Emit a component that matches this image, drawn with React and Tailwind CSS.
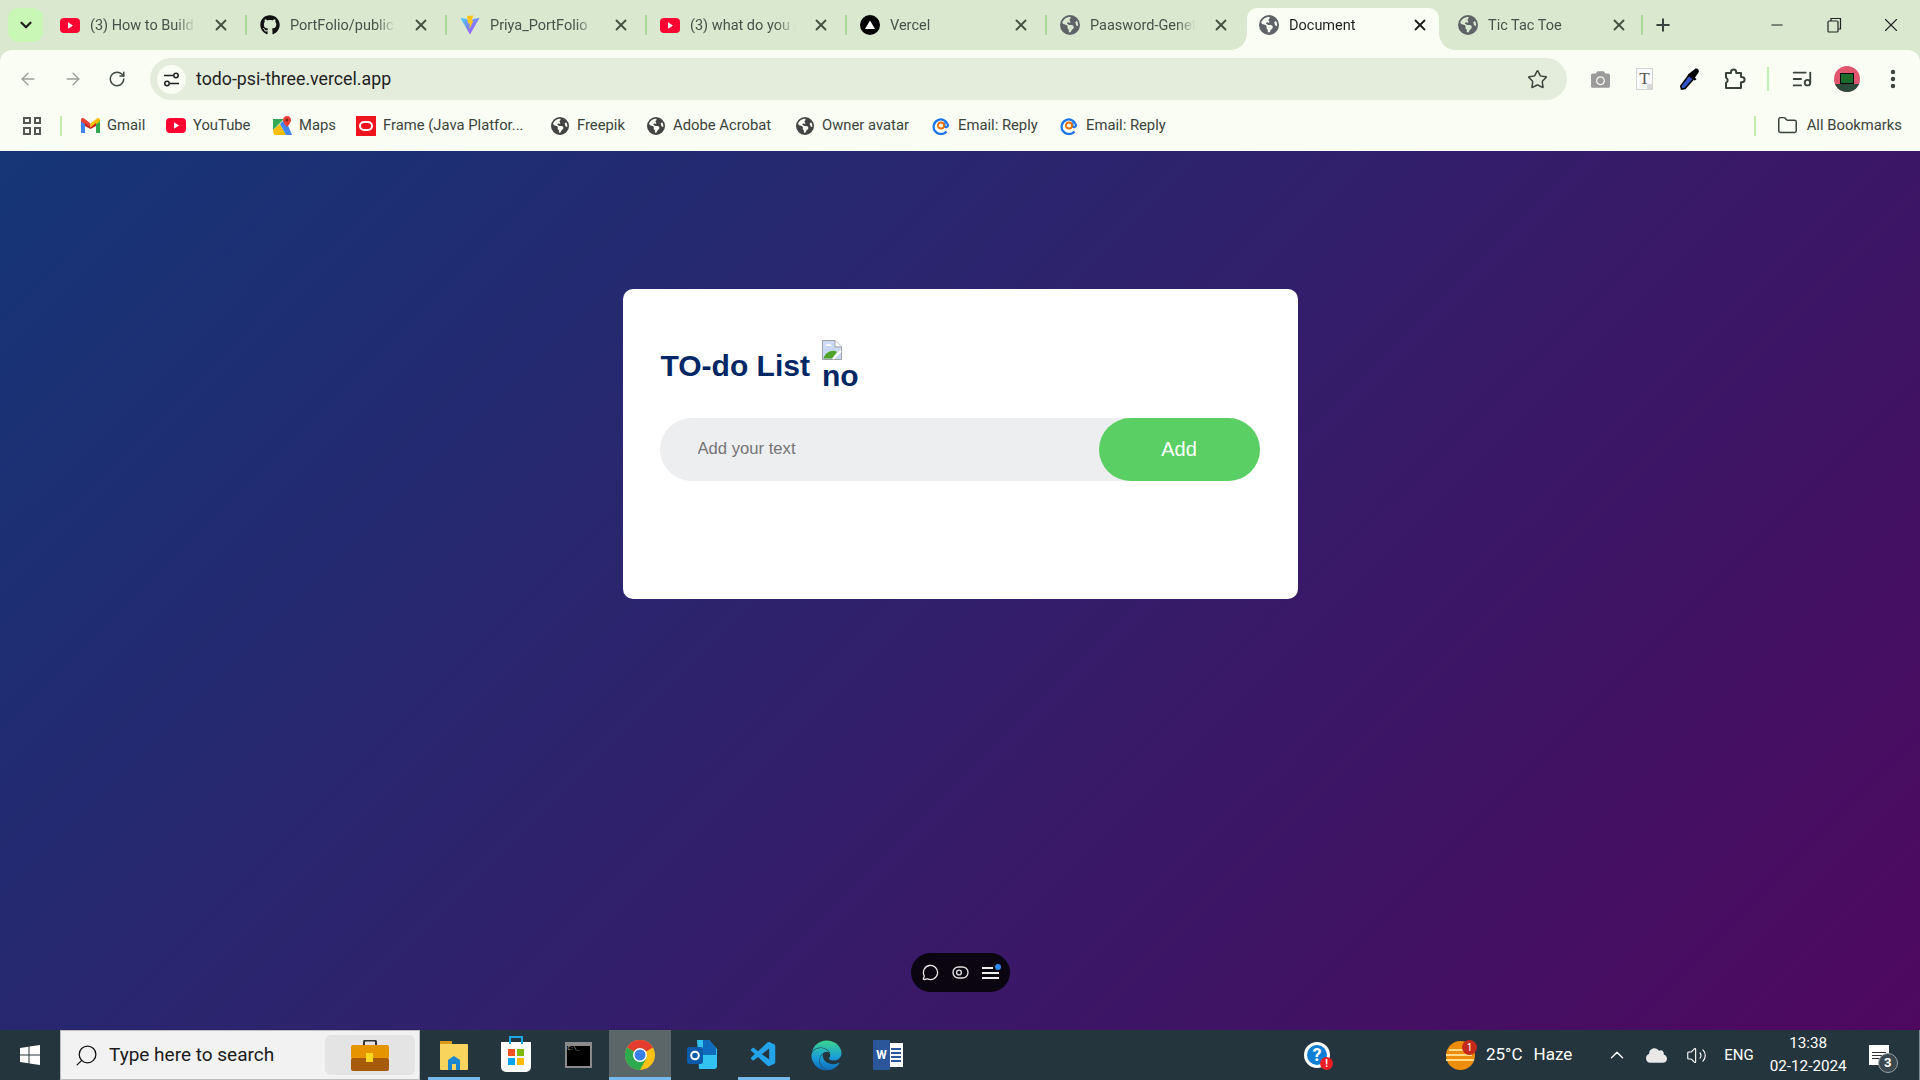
import { ArrowLeft, ArrowRight, RotateCw, Star, ListMusic, EllipsisVertical, X, Plus, Minus, ChevronDown, ChevronUp, Volume2, MessageCircle, Folder, Search } from 'lucide-react';
import { FaGithub, FaCamera, FaCloud, FaEdge } from 'react-icons/fa';
import { FaEarthAmericas } from 'react-icons/fa6';
import { VscVscode } from 'react-icons/vsc';

const uiFont = "font-['Roboto','Noto_Sans',sans-serif]";

const YouTubeIcon = () => (
    <svg width="20" height="15" viewBox="0 0 20 15">
        <rect width="20" height="15" rx="4" fill="#ff0033" />
        <path d="M8 4.3 L13 7.5 L8 10.7 Z" fill="#fff" />
    </svg>
);

const ViteIcon = () => (
    <svg width="20" height="20" viewBox="0 0 20 20">
        <defs>
            <linearGradient id="viteGrad" x1="0" y1="0" x2="1" y2="1">
                <stop offset="0" stopColor="#41d1ff" />
                <stop offset="1" stopColor="#bd34fe" />
            </linearGradient>
        </defs>
        <path d="M0.5 3 L10 19.5 L19.5 3 L13 4 L10 9 L7 4 Z" fill="url(#viteGrad)" />
        <path d="M7 1 L13.5 0.5 L11.5 6 L13.5 5.5 L9.5 14 L9.8 8 L8 8.5 Z" fill="#ffc517" />
    </svg>
);

const VercelIcon = () => (
    <svg width="20" height="20" viewBox="0 0 20 20">
        <circle cx="10" cy="10" r="10" fill="#000" />
        <path d="M10 5.5 L15 14 L5 14 Z" fill="#fff" />
    </svg>
);

const GlobeIcon = ({ color = '#5f6368', size = 20 }) => <FaEarthAmericas size={size} color={color} />;

const GmailIcon = () => (
    <svg width="19" height="15" viewBox="0 0 19 15">
        <path d="M0 2 L0 15 L4 15 L4 5 Z" fill="#4285f4" />
        <path d="M19 2 L19 15 L15 15 L15 5 Z" fill="#34a853" />
        <path d="M0 2 C0 0 2 -0.5 3.5 0.8 L9.5 5.5 L9.5 10 L0 3.5 Z" fill="#ea4335" />
        <path d="M19 2 C19 0 17 -0.5 15.5 0.8 L9.5 5.5 L9.5 10 L19 3.5 Z" fill="#fbbc04" />
        <path d="M4 5 L9.5 9.5 L15 5 L15 8 L9.5 11 L4 8 Z" fill="#c5221f" />
    </svg>
);

const MapsIcon = () => (
    <svg width="19" height="19" viewBox="0 0 19 19">
        <path d="M0 3 L11 3 L0 14 Z" fill="#34a853" />
        <path d="M0 14 L7 8 L13 19 L1 19 Z" fill="#fbbc04" />
        <path d="M7 8 L12 3 L17 14 L19 19 L13 19 Z" fill="#4285f4" />
        <path d="M14 0 C11.5 0 10 2 10 4 C10 7 14 11 14 11 C14 11 18 7 18 4 C18 2 16.5 0 14 0 Z" fill="#ea4335" />
        <circle cx="14" cy="4" r="1.5" fill="#8a1c14" />
    </svg>
);

const FrameIcon = () => (
    <div className="w-[20px] h-[20px] bg-[#f0141e] flex items-center justify-center">
        <div className="w-[14px] h-[10px] rounded-[5px] border-2 border-white"></div>
    </div>
);

const EmailIcon = () => (
    <svg width="18" height="18" viewBox="0 0 18 18">
        <path d="M14.5 14.5 A7.3 7.3 0 1 1 16 8 C16 10.5 13 11 12.5 9 L12.5 5.5" fill="none" stroke="#1a73e8" strokeWidth="2.2" />
        <circle cx="9" cy="8.5" r="3" fill="none" stroke="#e8710a" strokeWidth="1.8" />
    </svg>
);

const Tab = ({ icon, title, active, separator, className = '' }) => (
    <div className={`relative w-[200px] h-[50px] flex items-center shrink-0 pl-[14px] text-[14.5px] ${active ? 'text-[#1f1f1f]' : 'text-[#49524a]'} ${className}`}>
        {separator && <div className="absolute left-[-1px] top-[15px] w-[2px] h-[20px] bg-[#a9d899]"></div>}
        {active && (
            <>
                <div className="absolute left-[2px] right-[6px] top-[8px] bottom-0 bg-[#f9fdf3] rounded-t-[10px]"></div>
                <div className="absolute left-[-14px] bottom-0 w-4 h-4 bg-[radial-gradient(circle_at_0_0,transparent_15.5px,#f9fdf3_16px)]"></div>
                <div className="absolute right-[-10px] bottom-0 w-4 h-4 bg-[radial-gradient(circle_at_100%_0,transparent_15.5px,#f9fdf3_16px)]"></div>
            </>
        )}
        <div className="relative w-[20px] h-[20px] flex items-center justify-center shrink-0">{icon}</div>
        <div className="relative ml-[10px] pt-[1px] w-[110px] overflow-hidden whitespace-nowrap [mask-image:linear-gradient(to_right,black_78%,transparent_96%)]">{title}</div>
        <X className="relative ml-[12px] shrink-0" size={18} strokeWidth={2.4} color={active ? '#1f1f1f' : '#43503f'} />
    </div>
);

const Bookmark = ({ icon, label, width }) => (
    <div className={`flex items-center text-[14.8px] text-[#3c443b] whitespace-nowrap shrink-0 ${width}`}>
        <div className="w-[20px] h-[20px] flex items-center justify-center shrink-0">{icon}</div>
        <span className="ml-[7px]">{label}</span>
    </div>
);

const PuzzleIcon = () => (
    <svg className="ml-[22px] shrink-0" width="24" height="24" viewBox="0 0 24 24" fill="none" stroke="#39433a" strokeWidth="2" strokeLinejoin="round">
        <path d="M4 6 H9 V5 A2.6 2.6 0 0 1 14.2 5 V6 H19 V10 H20 A2.6 2.6 0 0 1 20 15.2 H19 V21 H4 V16 A3 3 0 0 0 4 10.6 Z" />
    </svg>
);

const BrowserChrome = () => (
    <div className={`shrink-0 bg-[#d9e8cf] ${uiFont}`}>
        {/* Tabs */}
        <div className="h-[50px] flex items-center pl-[8px]">
            <div className="w-[35px] h-[34px] rounded-[10px] bg-[#c9f7b5] flex items-center justify-center shrink-0">
                <ChevronDown size={18} strokeWidth={3} color="#1f1f1f" />
            </div>
            <div className="ml-[3px] flex">
                <Tab icon={<YouTubeIcon />} title="(3) How to Build a Portfolio" />
                <Tab icon={<FaGithub size={20} color="#111" />} title="PortFolio/public at main" separator />
                <Tab icon={<ViteIcon />} title="Priya_PortFolio" separator />
                <Tab icon={<YouTubeIcon />} title="(3) what do you mean" separator />
                <Tab icon={<VercelIcon />} title="Vercel" separator />
                <Tab icon={<GlobeIcon />} title="Paasword-Genetator" separator />
                <Tab icon={<GlobeIcon />} title="Document" active className="ml-[-1px]" />
                <Tab icon={<GlobeIcon />} title="Tic Tac Toe" className="ml-[-1px]" />
            </div>
            <div className="relative ml-[-3px] w-[2px] h-[20px] bg-[#a9d899]"></div>
            <Plus className="ml-[10px]" size={20} strokeWidth={2.4} color="#39433a" />
            <div className="ml-auto flex items-center">
                <Minus size={18} strokeWidth={1.4} color="#222" />
                <svg className="ml-[41px]" width="15" height="16" viewBox="0 0 15 16" fill="none" stroke="#222" strokeWidth="1.2">
                    <rect x="1" y="4" width="10" height="11" rx="1" />
                    <path d="M4 4 L4 1.5 L13.5 1.5 L13.5 12 L11 12" />
                </svg>
                <X className="ml-[38px] mr-[18px]" size={22} strokeWidth={1.2} color="#222" />
            </div>
        </div>

        <div className="bg-[#f9fdf3] rounded-t-[12px] h-[101px]">
            {/* Toolbar */}
            <div className="h-[50px] flex items-center pt-[8px]">
                <ArrowLeft className="ml-[18px]" size={20} strokeWidth={1.6} color="#9aa096" />
                <ArrowRight className="ml-[25px]" size={20} strokeWidth={1.6} color="#9aa096" />
                <RotateCw className="ml-[25px]" size={18} strokeWidth={2} color="#3f4a3f" />
                <div className="ml-[24px] w-[1417px] h-[42px] rounded-full bg-[#e4ecdc] flex items-center pl-[7px] shrink-0">
                    <div className="w-[29px] h-[29px] rounded-full bg-[#f9fdf3] flex items-center justify-center">
                        <svg width="17" height="17" viewBox="0 0 17 17" fill="none" stroke="#1f1f1f" strokeWidth="1.5">
                            <path d="M1 4.5 L10 4.5" />
                            <circle cx="13" cy="4.5" r="2.2" />
                            <path d="M16 12.5 L7 12.5" />
                            <circle cx="4" cy="12.5" r="2.2" />
                        </svg>
                    </div>
                    <span className="ml-[10px] pt-[1px] text-[17.75px] text-[#1f1f1f]">todo-psi-three.vercel.app</span>
                    <Star className="ml-auto mr-[19px]" size={21} strokeWidth={1.7} color="#39433a" />
                </div>
                <FaCamera className="ml-[24px] shrink-0" size={19} color="#9b9b9b" />
                <div className="relative ml-[26px] w-[17px] h-[22px] shrink-0 bg-[#fafafa] border border-[#d4d4d4] flex items-center justify-center font-['Liberation_Serif',serif] text-[17px] text-[#555]">
                    T
                    <div className="absolute right-0 bottom-0 w-[5px] h-[5px] bg-[#d8d8d8]"></div>
                </div>
                <svg className="ml-[27px] shrink-0" width="20" height="22" viewBox="0 0 20 22">
                    <path d="M1.5 21 L0.8 18 L9 7 L14 10.5 L5 20.5 Z" fill="#2f55c8" stroke="#000" strokeWidth="1.6" />
                    <path d="M8.5 6 L15 1 C17 -0.3 19.8 2 18.5 4.5 L15 9.5 L16.5 11.5 L14.5 12.5 L7.5 7.5 Z" fill="#000" />
                </svg>
                <PuzzleIcon />
                <div className="ml-[21px] w-[2px] h-[24px] shrink-0 bg-[#c4eeb0]"></div>
                <ListMusic className="ml-[22px] shrink-0" size={22} strokeWidth={2} color="#39433a" />
                <div className="ml-[21px] w-[26px] h-[26px] shrink-0 rounded-full bg-[#e0566e] overflow-hidden flex flex-col items-center justify-end">
                    <div className="w-[14px] h-[11px] bg-[#1c6b2a] border border-[#0a0a0a]"></div>
                    <div className="w-full h-[8px] bg-[#2c4a3c]"></div>
                </div>
                <EllipsisVertical className="ml-[21px] shrink-0" size={24} strokeWidth={2.4} color="#39433a" />
            </div>

            {/* Bookmarks */}
            <div className="h-[51px] flex items-center">
                <div className="ml-[23px] w-[18px] h-[18px] grid grid-cols-2 gap-[3px]">
                    {[0, 1, 2, 3].map((i) => (
                        <div key={i} className="border-2 border-[#555]"></div>
                    ))}
                </div>
                <div className="ml-[19px] mr-[18px] w-[2px] h-[20px] bg-[#c4eeb0]"></div>
                <Bookmark width="w-[86px]" icon={<GmailIcon />} label="Gmail" />
                <Bookmark width="w-[106px]" icon={<YouTubeIcon />} label="YouTube" />
                <Bookmark width="w-[84px]" icon={<MapsIcon />} label="Maps" />
                <Bookmark width="w-[194px]" icon={<FrameIcon />} label="Frame (Java Platfor..." />
                <Bookmark width="w-[96px]" icon={<GlobeIcon color="#444" size={18} />} label="Freepik" />
                <Bookmark width="w-[149px]" icon={<GlobeIcon color="#444" size={18} />} label="Adobe Acrobat" />
                <Bookmark width="w-[136px]" icon={<GlobeIcon color="#444" size={18} />} label="Owner avatar" />
                <Bookmark width="w-[128px]" icon={<EmailIcon />} label="Email: Reply" />
                <Bookmark width="w-[110px]" icon={<EmailIcon />} label="Email: Reply" />
                <div className="ml-auto w-[2px] h-[20px] bg-[#c4eeb0]"></div>
                <Folder className="ml-[21px]" size={21} strokeWidth={1.7} color="#39433a" />
                <span className="ml-[9px] mr-[18px] text-[14.8px] text-[#3c443b]">All Bookmarks</span>
            </div>
        </div>
    </div>
);

const BrokenImage = () => (
    <svg className="block" width="20" height="20" viewBox="0 0 20 20">
        <path d="M0.5 0.5 L13 0.5 L19.5 7 L19.5 19.5 L0.5 19.5 Z" fill="#c9d9f5" stroke="#a0a0a0" />
        <path d="M13 0.5 L13 7 L19.5 7" fill="#fff" stroke="#a0a0a0" />
        <path d="M3 6 C5 3 8 3 10 6 Z" fill="#fff" />
        <path d="M1.5 18.5 C3 12 11 9 15 12 L10 18.5 Z" fill="#4fa52c" />
        <path d="M11 19 L19 11" stroke="#fff" strokeWidth="2" />
    </svg>
);

const TodoCard = () => (
    <div className="w-[675px] h-[310px] mt-[138px] bg-white rounded-[10px] pt-[50px] pl-[37px] pr-[38px] font-['Liberation_Sans',Arial,sans-serif]">
        <div className="flex items-center h-[54px] text-[#002765] font-bold text-[30px]">
            <h2 className="ml-[1px] leading-none">TO-do List</h2>
            <div className="ml-[12px] w-[37px] leading-[34px]">
                <BrokenImage />
                <div className="mt-[-1px]">no</div>
            </div>
        </div>
        <div className="mt-[25px] h-[63px] rounded-full bg-[#edeef0] flex items-center">
            <input
                className="flex-1 min-w-0 bg-transparent pl-[38px] pb-[1px] text-[16.65px] outline-none placeholder:text-[#757575]"
                placeholder="Add your text"
            />
            <button className="w-[161px] h-full rounded-full bg-[#5ad064] text-white text-[20px] pb-[1px]">Add</button>
        </div>
    </div>
);

const DevToolbar = () => (
    <div className="absolute left-[911px] bottom-[38px] w-[99px] h-[39px] rounded-full bg-[#0b0512] flex items-center justify-center gap-[13px]">
        <MessageCircle size={17} strokeWidth={1.8} color="#eee" />
        <svg width="17" height="13" viewBox="0 0 17 13" fill="none" stroke="#ddd" strokeWidth="1.4">
            <rect x="1" y="1" width="15" height="11" rx="5.5" />
            <circle cx="7" cy="6.5" r="2.4" />
        </svg>
        <div className="relative w-[17px] flex flex-col gap-[3px]">
            <div className="h-[2px] w-[11px] bg-[#eee]"></div>
            <div className="h-[2px] bg-[#eee]"></div>
            <div className="h-[2px] bg-[#eee]"></div>
            <div className="absolute right-[-2px] top-[-3px] w-[6px] h-[6px] rounded-full bg-[#2e8bf0]"></div>
        </div>
    </div>
);

const TaskIcon = ({ children, active, open }) => (
    <div className={`relative w-[62px] h-[50px] flex items-center justify-center shrink-0 ${active ? 'bg-[#5b6668]' : ''}`}>
        {children}
        {(open || active) && <div className={`absolute bottom-0 h-[3px] bg-[#76b9ed] ${active ? 'inset-x-0' : 'inset-x-[5px]'}`}></div>}
    </div>
);

const ChromeIcon = () => (
    <svg width="30" height="30" viewBox="0 0 30 30">
        <circle cx="15" cy="15" r="15" fill="#fbc116" />
        <path d="M15 15 L2 7.5 A15 15 0 0 1 28 7.5 Z" fill="#e33b2e" />
        <path d="M15 15 L2 7.5 A15 15 0 0 0 15 30 L22 17 Z" fill="#2da94f" />
        <circle cx="15" cy="15" r="7" fill="#fff" />
        <circle cx="15" cy="15" r="5.5" fill="#3a7fe8" />
    </svg>
);

const Taskbar = () => (
    <div className={`h-[50px] shrink-0 bg-[#25353d] flex items-center text-white ${uiFont}`}>
        <svg className="ml-[20px] shrink-0" width="20" height="20" viewBox="0 0 20 20" fill="#fff">
            <path d="M0 3 L8.5 1.8 L8.5 9.5 L0 9.5 Z" />
            <path d="M9.5 1.6 L20 0 L20 9.5 L9.5 9.5 Z" />
            <path d="M0 10.5 L8.5 10.5 L8.5 18.2 L0 17 Z" />
            <path d="M9.5 10.5 L20 10.5 L20 20 L9.5 18.4 Z" />
        </svg>

        <div className="ml-[20px] w-[360px] h-[50px] shrink-0 bg-[#f2f2f2] border border-[#bdbdbd] flex items-center pl-[13px] text-[#1b1b1b]">
            <Search className="scale-x-[-1]" size={25} strokeWidth={1.2} color="#111" />
            <span className="ml-[10px] text-[19px]">Type here to search</span>
            <div className="ml-auto mr-[4px] w-[90px] h-[40px] rounded-[6px] bg-[#e4e4e4] flex items-center justify-center">
                <svg width="38" height="31" viewBox="0 0 38 31">
                    <path d="M13 6 L13 2 Q13 0.5 15 0.5 L23 0.5 Q25 0.5 25 2 L25 6" fill="none" stroke="#333" strokeWidth="2" />
                    <rect y="5" width="38" height="14" rx="2" fill="#e69400" />
                    <rect y="18" width="38" height="13" rx="2" fill="#a65a0c" />
                    <rect x="15" y="13" width="7" height="9" fill="#f8d81c" />
                </svg>
            </div>
        </div>

        <div className="ml-[3px] flex">
            <TaskIcon open>
                <svg width="28" height="32" viewBox="0 0 28 32">
                    <path d="M0 2 L12 2 L12 6 L0 6 Z" fill="#d99a1c" />
                    <rect y="5" width="28" height="26" rx="1" fill="#f9d45c" />
                    <path d="M8 31 L8 21 L14 17 L20 21 L20 31 L16 31 L16 25 L12 25 L12 31 Z" fill="#1a86d0" />
                </svg>
            </TaskIcon>
            <TaskIcon>
                <div className="relative w-[30px] h-[30px] bg-white rounded-b-[5px] mt-[4px] grid grid-cols-2 gap-[2px] p-[7px]">
                    <div className="absolute left-[8px] top-[-6px] w-[14px] h-[8px] border-2 border-b-0 border-[#1ea7e8]"></div>
                    <div className="bg-[#f25022]"></div>
                    <div className="bg-[#7fba00]"></div>
                    <div className="bg-[#00a4ef]"></div>
                    <div className="bg-[#ffb900]"></div>
                </div>
            </TaskIcon>
            <TaskIcon>
                <div className="w-[27px] h-[26px] mt-[-1px] bg-black border-2 border-t-[4px] border-[#8b8b8b] text-[5px] leading-[6px] text-[#ddd] pl-[1px] font-mono">C:\_</div>
            </TaskIcon>
            <TaskIcon active>
                <ChromeIcon />
            </TaskIcon>
            <TaskIcon>
                <svg width="30" height="30" viewBox="0 0 30 30">
                    <path d="M10 0 L22 0 L30 9 L30 26 Q30 29 27 29 L12 29 Z" fill="#33c3f0" />
                    <path d="M16 0 L22 0 L29 8 L29 15 L16 15 Z" fill="#0f6cbd" />
                    <rect y="7" width="16" height="17" rx="2" fill="#0a5cab" />
                    <circle cx="8" cy="15.5" r="3.8" fill="none" stroke="#fff" strokeWidth="2" />
                </svg>
            </TaskIcon>
            <TaskIcon open>
                <VscVscode size={30} color="#23a3ea" />
            </TaskIcon>
            <TaskIcon>
                <svg width="0" height="0" className="absolute">
                    <defs>
                        <linearGradient id="edgeGrad" x1="0" y1="0" x2="0" y2="1">
                            <stop offset="0" stopColor="#3bd58c" />
                            <stop offset="0.55" stopColor="#1a9fd8" />
                            <stop offset="1" stopColor="#0f6cbd" />
                        </linearGradient>
                    </defs>
                </svg>
                <FaEdge size={31} className="fill-[url(#edgeGrad)]" />
            </TaskIcon>
            <TaskIcon>
                <div className="relative w-[30px] h-[30px] flex items-center">
                    <div className="absolute right-0 top-[3px] w-[23px] h-[24px] bg-white flex flex-col justify-center gap-[2px] pl-[11px] pr-[2px]">
                        <div className="h-[2px] bg-[#2b579a]"></div>
                        <div className="h-[2px] bg-[#2b579a]"></div>
                        <div className="h-[2px] bg-[#2b579a]"></div>
                        <div className="h-[2px] bg-[#2b579a]"></div>
                    </div>
                    <div className="relative w-[17px] h-[30px] bg-[#2b579a] rounded-[1px] flex items-center justify-center text-[12px] font-bold">W</div>
                </div>
            </TaskIcon>
        </div>

        {/* Tray */}
        <div className="relative ml-[385px] w-[26px] h-[26px] rounded-full border-[3px] border-white bg-[#0f7fd6] flex items-center justify-center shrink-0 text-[18px] font-bold leading-none">
            ?
            <div className="absolute right-[-6px] bottom-[-5px] w-[13px] h-[13px] rounded-full bg-[#ee1c25] flex items-center justify-center text-[10px] font-bold">!</div>
        </div>
        <div className="relative ml-[116px] w-[29px] h-[29px] rounded-full bg-[#ee8c0c] shrink-0 flex flex-col justify-center gap-[3px]">
            <div className="h-[2px] w-[22px] ml-[3px] bg-[#ffdc8a]"></div>
            <div className="h-[2px] w-[26px] bg-[#ffdc8a]"></div>
            <div className="h-[2px] w-[28px] bg-[#ffdc8a]"></div>
            <div className="absolute right-[-2px] top-[-1px] w-[15px] h-[15px] rounded-full bg-[#c42b1c] flex items-center justify-center text-[10px]">1</div>
        </div>
        <span className="ml-[11px] text-[17px] whitespace-nowrap">25°C</span>
        <span className="ml-[11px] text-[17px] whitespace-nowrap">Haze</span>
        <ChevronUp className="ml-[34px] shrink-0" size={22} strokeWidth={1.5} color="#fff" />
        <FaCloud className="ml-[18px] shrink-0" size={21} color="#e8e8e8" />
        <Volume2 className="ml-[19px] shrink-0" size={21} strokeWidth={1.3} color="#fff" />
        <span className="ml-[17px] text-[15px] whitespace-nowrap">ENG</span>
        <div className="ml-[16px] w-[77px] flex flex-col items-center text-[15.25px] leading-[23px] shrink-0">
            <span>13:38</span>
            <span className="whitespace-nowrap">02-12-2024</span>
        </div>
        <div className="relative ml-[22px] w-[20px] h-[20px] bg-white shrink-0 flex flex-col justify-center gap-[2px] px-[3px]">
            <div className="h-[1px] bg-[#333]"></div>
            <div className="h-[1px] bg-[#333]"></div>
            <div className="h-[1px] bg-[#333] w-[9px]"></div>
            <div className="absolute right-[-9px] bottom-[-8px] w-[20px] h-[20px] rounded-full bg-[#3b474e] border border-[#9aa3a8] flex items-center justify-center text-[13px] font-bold text-white">3</div>
        </div>
        <div className="ml-auto w-[1px] h-full bg-[#7c8a91]"></div>
    </div>
);

export default function App() {
    return (
        <div className="w-screen h-screen overflow-hidden flex flex-col">
            <BrowserChrome />
            <main className="relative flex-1 min-h-0 flex justify-center items-start bg-[linear-gradient(135deg,#153677,#4e085f)]">
                <TodoCard />
                <DevToolbar />
            </main>
            <Taskbar />
        </div>
    );
}
